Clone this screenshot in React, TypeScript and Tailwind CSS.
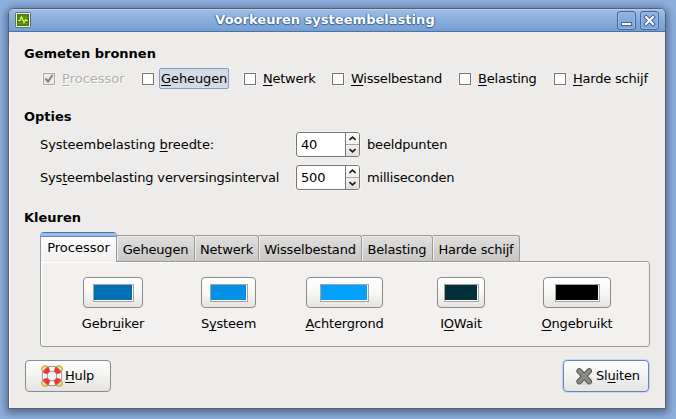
import type { ReactNode } from "react";

const U = ({ children }: { children: ReactNode }) => (
  <span className="underline decoration-1 underline-offset-[2px] [text-decoration-skip-ink:none]">{children}</span>
);

type Label = [string, string, string];

const Mnemonic = ({ label }: { label: Label }) => (
  <>
    {label[0]}
    <U>{label[1]}</U>
    {label[2]}
  </>
);

const sources: { label: Label; width: string; state?: "disabled" | "focus" }[] = [
  { label: ["", "P", "rocessor"], width: "w-[99px] tracking-normal", state: "disabled" },
  { label: ["", "G", "eheugen"], width: "w-[102px] tracking-[-0.1px]", state: "focus" },
  { label: ["", "N", "etwerk"], width: "w-[88px] tracking-[-0.25px]" },
  { label: ["", "W", "isselbestand"], width: "w-[127px] tracking-[-0.22px]" },
  { label: ["", "B", "elasting"], width: "w-[95px] tracking-[-0.2px]" },
  { label: ["", "H", "arde schijf"], width: "w-[100px] tracking-[-0.2px]" },
];

const tabs = [
  { name: "Geheugen", width: "w-[78px]" },
  { name: "Netwerk", width: "w-[64px]" },
  { name: "Wisselbestand", width: "w-[103px]" },
  { name: "Belasting", width: "w-[71px]" },
  { name: "Harde schijf", width: "w-[87px]" },
];

const colors: { label: Label; column: string; button: string; swatch: string }[] = [
  { label: ["Gebr", "u", "iker"], column: "ml-[42px] w-[60px]", button: "w-[60px]", swatch: "w-[41px] bg-[#0271b3]" },
  { label: ["S", "y", "steem"], column: "ml-[58px] w-[55px]", button: "w-[55px]", swatch: "w-[38px] bg-[#0390e6]" },
  { label: ["", "A", "chtergrond"], column: "ml-[50px] w-[77px]", button: "w-[77px]", swatch: "w-[49px] bg-[#03a1ff]" },
  { label: ["I", "O", "Wait"], column: "ml-[54px] w-[48px]", button: "w-[48px]", swatch: "w-[35px] bg-[#022f3c]" },
  { label: ["", "O", "ngebruikt"], column: "ml-[58px] w-[68px]", button: "w-[68px]", swatch: "w-[45px] bg-black" },
];

const Check = ({ disabled }: { disabled?: boolean }) => (
  <span
    className={
      "flex h-[12px] w-[12px] shrink-0 border shadow-[0_0_0_1px_#f5f4f2] " +
      (disabled ? "border-[#aaa8a5] bg-[#edecea]" : "border-[#787672] bg-white")
    }
  >
    {disabled && (
      <svg width="10" height="10" viewBox="0 0 10 10" fill="none" stroke="#838180" strokeWidth="2">
        <path d="M1.5 4.5 4 7.5 8.5 1" />
      </svg>
    )}
  </span>
);

const Heading = ({ children, className }: { children: ReactNode; className: string }) => (
  <h2 className={"ml-[15px] h-[18px] text-[13px] leading-[18px] font-bold tracking-normal " + className}>{children}</h2>
);

const Spin = ({ value }: { value: string }) => (
  <div className="flex h-[25px] w-[64px] overflow-hidden rounded-[3px] border border-[#787672] bg-white shadow-[0_0_0_1px_#f3f2f0]">
    <span className="w-[49px] pl-[4px] leading-[23px]">{value}</span>
    <div className="flex w-[14px] flex-col border-l border-[#787672] bg-gradient-to-b from-white to-[#e1e0de]">
      <span className="flex h-[12px] items-center justify-center border-b border-[#a8a6a3]">
        <svg width="7" height="5" viewBox="0 0 7 5" fill="none" stroke="#1a1a1a" strokeWidth="1.6">
          <path d="M.5 4 3.5 1.2 6.5 4" />
        </svg>
      </span>
      <span className="flex h-[11px] items-center justify-center">
        <svg width="7" height="5" viewBox="0 0 7 5" fill="none" stroke="#1a1a1a" strokeWidth="1.6">
          <path d="M.5 1 3.5 3.8 6.5 1" />
        </svg>
      </span>
    </div>
  </div>
);

const SystemIcon = () => (
  <svg className="ml-[6px]" width="16" height="16" viewBox="0 0 16 16">
    <rect x=".5" y=".5" width="15" height="15" rx="1" fill="#eeeeea" stroke="#6b6e66" />
    <rect x="2.5" y="2.5" width="11" height="11" fill="#438908" stroke="#3b7a0a" />
    <path d="M3 5.5h10M3 8.5h10M3 11.5h10M5.5 3v10M8.5 3v10M11.5 3v10" stroke="#63a52a" strokeWidth=".6" />
    <path d="M3 8.5h2L6.5 5 9 10.5 10.5 7.5 11.3 8.5H13" fill="none" stroke="#f3ee5e" strokeWidth="1.2" />
  </svg>
);

const HelpIcon = () => (
  <svg width="22" height="22" viewBox="0 0 22 22" fill="none">
    <g stroke="#b99a10" strokeWidth="1.8">
      <circle cx="4" cy="4" r="2.9" />
      <circle cx="18" cy="4" r="2.9" />
      <circle cx="4" cy="18" r="2.9" />
      <circle cx="18" cy="18" r="2.9" />
    </g>
    <g stroke="#f4df58" strokeWidth=".8">
      <circle cx="4" cy="4" r="2.9" />
      <circle cx="18" cy="4" r="2.9" />
      <circle cx="4" cy="18" r="2.9" />
      <circle cx="18" cy="18" r="2.9" />
    </g>
    <circle cx="11" cy="11" r="7.4" stroke="#858079" strokeWidth="5.8" />
    <circle cx="11" cy="11" r="7.4" stroke="#f6f5f3" strokeWidth="4.4" />
    <circle
      cx="11"
      cy="11"
      r="7.4"
      stroke="#ea3a36"
      strokeWidth="4.6"
      pathLength="80"
      strokeDasharray="11 9"
      strokeDashoffset="-4.5"
    />
  </svg>
);

const CloseIcon = () => (
  <svg width="19" height="19" viewBox="0 0 19 19" fill="none" strokeLinecap="round">
    <ellipse cx="10" cy="16.5" rx="8" ry="1.8" fill="#d8d6d3" />
    <path d="M4.2 4 14.2 14.5M14.2 4 4.2 14.5" stroke="#50504e" strokeWidth="5.6" />
    <path d="M4.2 4 14.2 14.5M14.2 4 4.2 14.5" stroke="#8b8c89" strokeWidth="3.8" />
  </svg>
);

const titleButton =
  "flex h-[19px] w-[19px] items-center justify-center rounded-[3px] border border-[#41689c] bg-gradient-to-b from-[#92b4e0] to-[#7ca2d3] shadow-[inset_0_0_0_1px_#9cbbe3]";

export default function App() {
  return (
    <div className="h-[419px] w-[676px] overflow-hidden bg-[#8fb0de] pt-[8px] pl-[8px] font-['DejaVu_Sans',sans-serif] text-[13px] tracking-[-0.18px] text-black">
      <main className="h-[401px] w-[658px] overflow-hidden rounded-t-[6px] border border-[#5e6065] bg-[#edecea] shadow-[0_2px_8px_2px_rgba(25,45,80,0.55)]">
        <header className="flex h-[23px] items-center border-b border-[#4a74a9] bg-gradient-to-b from-[#9dbde7] to-[#759fd1] shadow-[inset_0_1px_0_#b6cff0]">
          <SystemIcon />
          <h1 className="w-[594px] pr-[6px] text-center text-[13px] font-bold tracking-[0.03px] text-white [text-shadow:0_1px_1px_#345f98,1px_0_1px_#4a74aa,-1px_0_1px_#4a74aa]">
            Voorkeuren systeembelasting
          </h1>
          <div className="-ml-[8px] flex gap-[4px]">
            <span className={titleButton}>
              <svg width="17" height="17" viewBox="0 0 17 17">
                <rect x="3.5" y="10.5" width="10" height="3" fill="white" stroke="#41689c" />
              </svg>
            </span>
            <span className={titleButton}>
              <svg width="17" height="17" viewBox="0 0 17 17" fill="none" strokeLinecap="square">
                <path d="m5 5 7 7m0-7-7 7" stroke="#41689c" strokeWidth="4" />
                <path d="m5 5 7 7m0-7-7 7" stroke="white" strokeWidth="2" />
              </svg>
            </span>
          </div>
        </header>

        <div className="h-[376px] border-l border-white">
          <div className="-ml-px">
            <Heading className="mt-[13px]">Gemeten bronnen</Heading>
            <div className="mt-[5px] ml-[34px] flex h-[21px] w-[620px] items-center">
              {sources.map((s) => (
                <label key={s.label[1]} className={"flex items-center whitespace-nowrap " + s.width}>
                  <Check disabled={s.state === "disabled"} />
                  <span
                    className={
                      s.state === "focus"
                        ? "ml-[5px] h-[21px] rounded-[2px] border border-[#829fc6] bg-[#d4dbe7] px-[1px] leading-[19px]"
                        : s.state === "disabled"
                          ? "ml-[7px] text-[#b1afac] [text-shadow:1px_1px_0_white]"
                          : "ml-[7px]"
                    }
                  >
                    <Mnemonic label={s.label} />
                  </span>
                </label>
              ))}
            </div>

            <Heading className="mt-[19px]">Opties</Heading>
            <div className="mt-[6px] ml-[31px] flex flex-col gap-[8px]">
              <div className="flex items-center">
                <span className="w-[256px] tracking-[-0.05px]">
                  <Mnemonic label={["Systeembelasting ", "b", "reedte:"]} />
                </span>
                <Spin value="40" />
                <span className="ml-[7px]">beeldpunten</span>
              </div>
              <div className="flex items-center">
                <span className="w-[256px] whitespace-nowrap">
                  <Mnemonic label={["Sys", "t", "eembelasting verversingsinterval"]} />
                </span>
                <Spin value="500" />
                <span className="ml-[7px]">milliseconden</span>
              </div>
            </div>

            <Heading className="mt-[19px]">Kleuren</Heading>
            <nav className="mt-[5px] ml-[31px] flex h-[29px] items-end">
              <div className="relative z-10 -mb-px h-[30px] w-[77px] overflow-hidden rounded-t-[4px] border border-b-0 border-[#8d9bac] border-t-[#4a70a4] bg-gradient-to-b from-[#fdfdfd] to-[#f2f1ef]">
                <div className="h-[4px] border-b border-[#5f87bd] bg-[#9bbce8]" />
                <div className="text-center leading-[21px] tracking-normal">Processor</div>
              </div>
              {tabs.map((t) => (
                <div
                  key={t.name}
                  className={
                    "h-[26px] rounded-tr-[3px] border-t border-r border-[#9c9a96] bg-gradient-to-b from-[#e0dfdd] to-[#c9c7c5] text-center leading-[27px] whitespace-nowrap shadow-[inset_1px_1px_0_#eeedeb] " +
                    t.width
                  }
                >
                  {t.name}
                </div>
              ))}
            </nav>
            <section className="ml-[31px] flex h-[86px] w-[610px] rounded-[3px] rounded-tl-none border border-[#9c9a96] bg-[#f2f1ef] pt-[15px] shadow-[inset_1px_1px_0_white]">
              {colors.map((c) => (
                <div key={c.swatch} className={"flex shrink-0 flex-col items-center whitespace-nowrap " + c.column}>
                  <button
                    className={
                      "flex h-[31px] items-center justify-center rounded-[4px] border border-[#8d8b88] bg-gradient-to-b from-white via-[#f8f7f6] to-[#e5e4e2] " +
                      c.button
                    }
                  >
                    <span className={"h-[18px] border border-[#a7a4a0] shadow-[inset_-1px_-1px_0_white] " + c.swatch} />
                  </button>
                  <span className="mt-[6px] leading-[20px]">
                    <Mnemonic label={c.label} />
                  </span>
                </div>
              ))}
            </section>

            <footer className="mt-[13px] mr-[16px] ml-[16px] flex justify-between">
              <button className="flex h-[32px] w-[86px] items-center rounded-[4px] border border-[#8d8b88] bg-gradient-to-b from-white to-[#e5e4e2] pl-[15px]">
                <HelpIcon />
                <span className="ml-[2px]">
                  <Mnemonic label={["", "H", "ulp"]} />
                </span>
              </button>
              <button className="flex h-[32px] w-[86px] items-center rounded-[4px] border border-[#6288b9] bg-gradient-to-b from-white to-[#e5e4e2] pl-[11px] shadow-[0_0_0_1px_#c7d5e8]">
                <CloseIcon />
                <span className="ml-[2px]">
                  <Mnemonic label={["Sl", "u", "iten"]} />
                </span>
              </button>
            </footer>
          </div>
        </div>
      </main>
    </div>
  );
}
